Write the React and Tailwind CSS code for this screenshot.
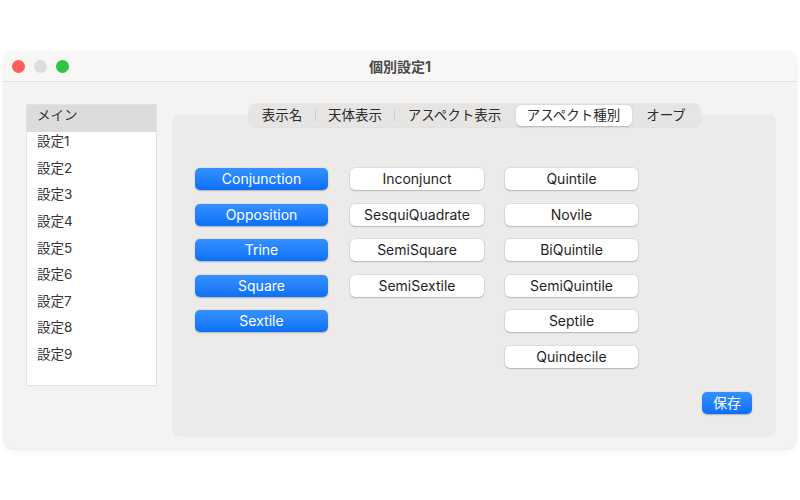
import React from "react";

const FONT = "font-['Inter','Noto_Sans_CJK_JP',sans-serif]";

const col1 = ["Conjunction", "Opposition", "Trine", "Square", "Sextile"];
const col2 = ["Inconjunct", "SesquiQuadrate", "SemiSquare", "SemiSextile"];
const col3 = ["Quintile", "Novile", "BiQuintile", "SemiQuintile", "Septile", "Quindecile"];

const tabs = [
  { label: "表示名", w: "w-[67px]" },
  { label: "天体表示", w: "w-[79px]" },
  { label: "アスペクト表示", w: "w-[120px]" },
  { label: "アスペクト種別", w: "w-[118px]", active: true },
  { label: "オーブ", w: "w-[67px]" },
];

function BlueBtn({ children, w = "w-[133px]" }) {
  return (
    <div
      className={`${w} h-[22px] rounded-[5px] bg-gradient-to-b from-[#3591ff] to-[#0b6ff7] shadow-[0_0.5px_1.5px_rgba(0,0,0,0.25)] flex items-center justify-center text-white text-[14px] font-normal leading-none`}
    >
      {children}
    </div>
  );
}

function WhiteBtn({ children, w = "w-[133px]" }) {
  return (
    <div
      className={`${w} h-[22px] rounded-[5px] bg-white shadow-[0_0_0_0.5px_rgba(0,0,0,0.12),0_1px_1.5px_rgba(0,0,0,0.18)] flex items-center justify-center text-[#1f1f1f] text-[14px] font-normal leading-none`}
    >
      {children}
    </div>
  );
}

export default function App() {
  const list = ["メイン", "設定1", "設定2", "設定3", "設定4", "設定5", "設定6", "設定7", "設定8", "設定9"];
  return (
    <div className={`w-[800px] h-[500px] bg-white pt-[52px] px-[4px] ${FONT}`}>
      <div className="w-[792px] h-[397px] rounded-[10px] bg-[#f4f3f2] shadow-[0_0_0_0.5px_rgba(0,0,0,0.06),0_2px_6px_rgba(0,0,0,0.06)] flex flex-col overflow-hidden">
        {/* title bar */}
        <div className="h-[30px] shrink-0 bg-[#f8f7f6] border-b border-[#e2e1e0] flex items-center relative">
          <div className="flex items-center gap-[9px] pl-[8px]">
            <div className="w-[13px] h-[13px] rounded-full bg-[#fe5f57]" />
            <div className="w-[13px] h-[13px] rounded-full bg-[#dcdcdc]" />
            <div className="w-[13px] h-[13px] rounded-full bg-[#2ac840]" />
          </div>
          <div className="absolute inset-0 flex items-center justify-center text-[14px] font-bold text-[#4a4a4a] pointer-events-none">
            個別設定1
          </div>
        </div>
        {/* body */}
        <div className="flex flex-1 pl-[22px] pr-[21px] pt-[22px]">
          {/* sidebar */}
          <div className="w-[131px] h-[282px] bg-white border border-[#e3e3e3] flex flex-col">
            {list.map((t, i) => (
              <div
                key={t}
                className={`h-[26.6px] shrink-0 flex items-center pl-[10px] pb-[7px] text-[13.5px] text-[#353535] ${
                  i === 0 ? "bg-[#dcdcdc]" : ""
                }`}
              >
                {t}
              </div>
            ))}
          </div>
          {/* main */}
          <div className="flex-1 ml-[16px] flex flex-col items-center">
            <div className="relative z-10 h-[23px] flex items-center rounded-[6px] bg-[#e6e5e4] shadow-[0_0_0_0.5px_rgba(0,0,0,0.08)] text-[13.5px] text-[#2a2a2a]">
              {tabs.map((t, i) => {
                const next = tabs[i + 1];
                const showSep = next && !t.active && !next.active;
                return (
                  <div key={t.label} className={`${t.w} h-full relative flex items-center justify-center`}>
                    {t.active ? (
                      <div className="absolute inset-[1px] rounded-[5px] bg-white shadow-[0_0.5px_1.5px_rgba(0,0,0,0.2)] flex items-center justify-center">
                        {t.label}
                      </div>
                    ) : (
                      <span>{t.label}</span>
                    )}
                    {showSep && (
                      <div className="absolute right-0 top-[6px] w-px h-[11px] bg-[#cfcecd]" />
                    )}
                  </div>
                );
              })}
            </div>
            <div className="-mt-[12px] w-[602px] h-[321px] rounded-[6px] bg-[#ecebea] shadow-[0_0_0_0.5px_rgba(0,0,0,0.05)] flex flex-col">
              <div className="flex gap-[22px] pl-[22px] pt-[53px]">
                <div className="flex flex-col gap-[13.6px]">
                  {col1.map((t) => (
                    <BlueBtn key={t}>{t}</BlueBtn>
                  ))}
                </div>
                <div className="flex flex-col gap-[13.6px]">
                  {col2.map((t) => (
                    <WhiteBtn key={t} w="w-[134px]">{t}</WhiteBtn>
                  ))}
                </div>
                <div className="flex flex-col gap-[13.6px] -ml-[1px]">
                  {col3.map((t) => (
                    <WhiteBtn key={t}>{t}</WhiteBtn>
                  ))}
                </div>
              </div>
              <div className="mt-auto self-end mr-[23px] mb-[22px]">
                <BlueBtn w="w-[50px]">保存</BlueBtn>
              </div>
            </div>
          </div>
        </div>
      </div>
    </div>
  );
}
